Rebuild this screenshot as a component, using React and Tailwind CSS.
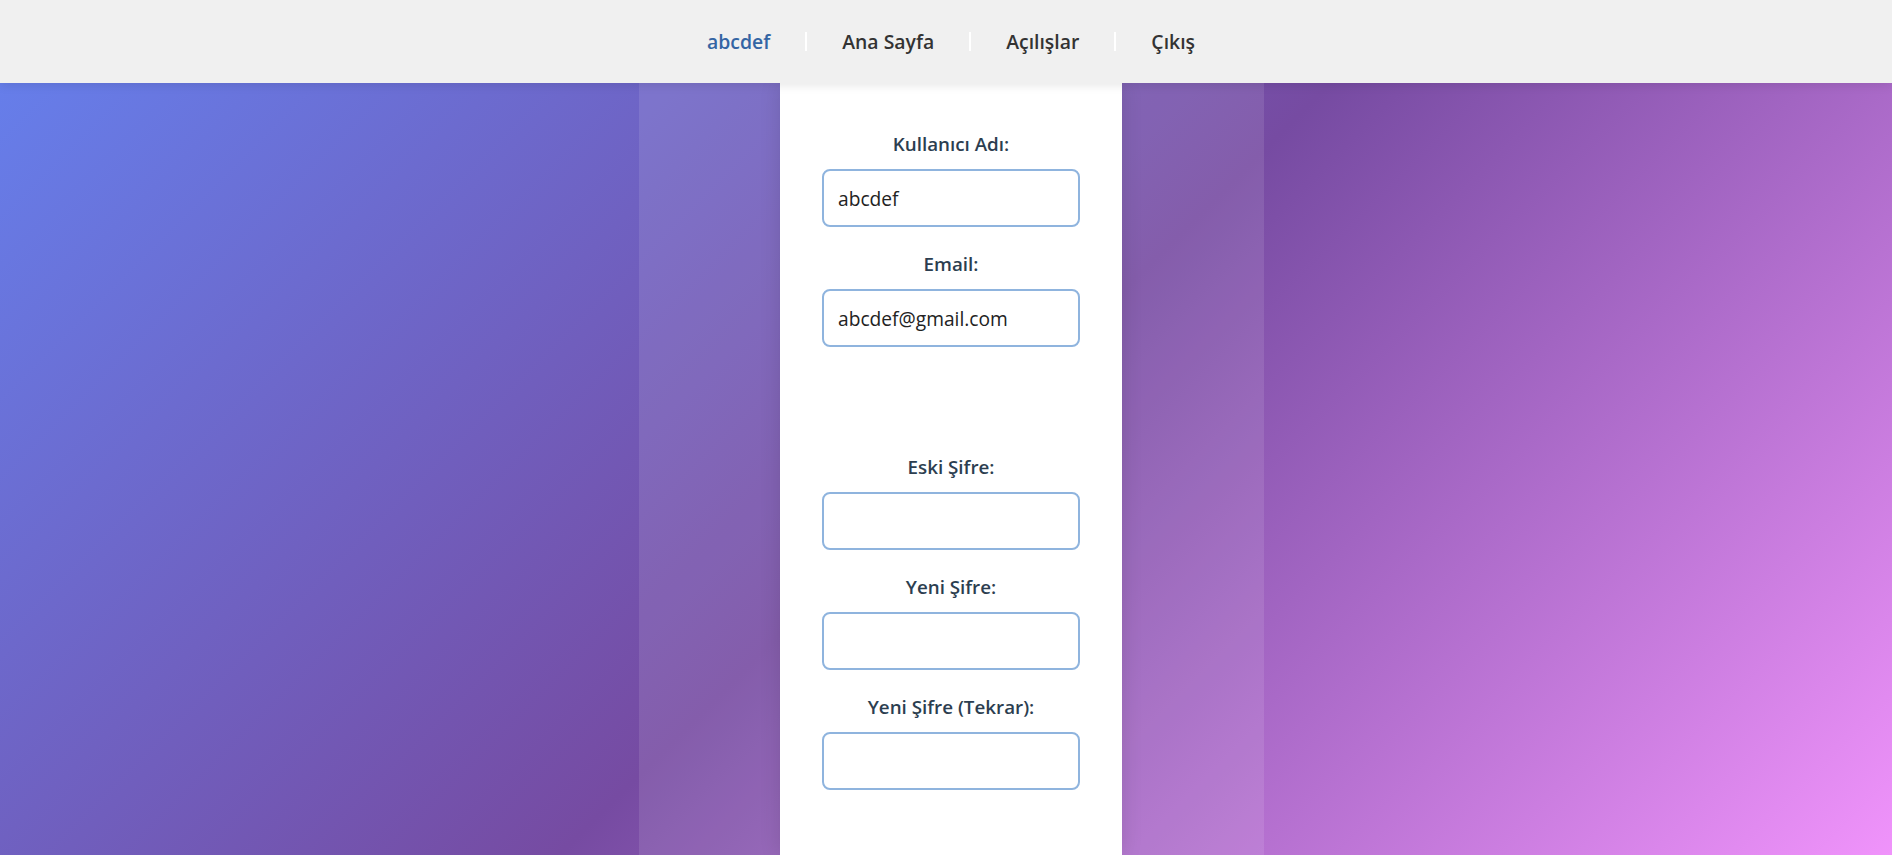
import React from 'react';

const navItems = [
    { label: 'abcdef', active: true },
    { label: 'Ana Sayfa' },
    { label: 'Açılışlar' },
    { label: 'Çıkış' },
];

const Field = ({ label, value, type = 'text', className = '' }) => (
    <div className={`flex flex-col items-center mb-[24px] ${className}`}>
        <label className="block text-[18.8px] leading-[26px] font-semibold text-[#2c3e50] mb-[12px]">{label}</label>
        <input
            type={type}
            defaultValue={value}
            className="w-[258px] h-[58px] border-2 border-[#8fb4de] rounded-[8px] bg-white px-[14px] text-[19.2px] text-[#222] outline-none"
        />
    </div>
);

const App = () => {
    return (
        <div className="min-h-screen font-['Open_Sans','Noto_Sans',sans-serif]">
            <header className="relative z-10 h-[83px] bg-[#f0f0f0] shadow-[0_2px_10px_rgba(0,0,0,0.1)] flex items-center justify-center pl-[10px]">
                <nav className="flex items-center">
                    {navItems.map((item, i) => (
                        <React.Fragment key={item.label}>
                            {i > 0 && <span className="w-[2px] h-[19px] bg-white"></span>}
                            <a
                                href="#"
                                className={`px-[35px] text-[19.4px] font-semibold ${item.active ? 'text-[#3465a4]' : 'text-[#333]'}`}
                            >
                                {item.label}
                            </a>
                        </React.Fragment>
                    ))}
                </nav>
            </header>

            <main className="h-[772px] overflow-hidden bg-[linear-gradient(135deg,#667eea_0%,#764ba2_50%,#f093fb_100%)] flex justify-center pl-[10px]">
                <div className="w-[625px] bg-white/10 flex justify-center">
                    <div className="w-[342px] bg-white shadow-[0_0_20px_rgba(0,0,0,0.12)] pt-[48px] flex flex-col items-center">
                        <Field label="Kullanıcı Adı:" value="abcdef" />
                        <Field label="Email:" value="abcdef@gmail.com" />
                        <Field label="Eski Şifre:" type="password" className="mt-[83px]" />
                        <Field label="Yeni Şifre:" type="password" />
                        <Field label="Yeni Şifre (Tekrar):" type="password" />
                    </div>
                </div>
            </main>
        </div>
    );
};

export default App;
